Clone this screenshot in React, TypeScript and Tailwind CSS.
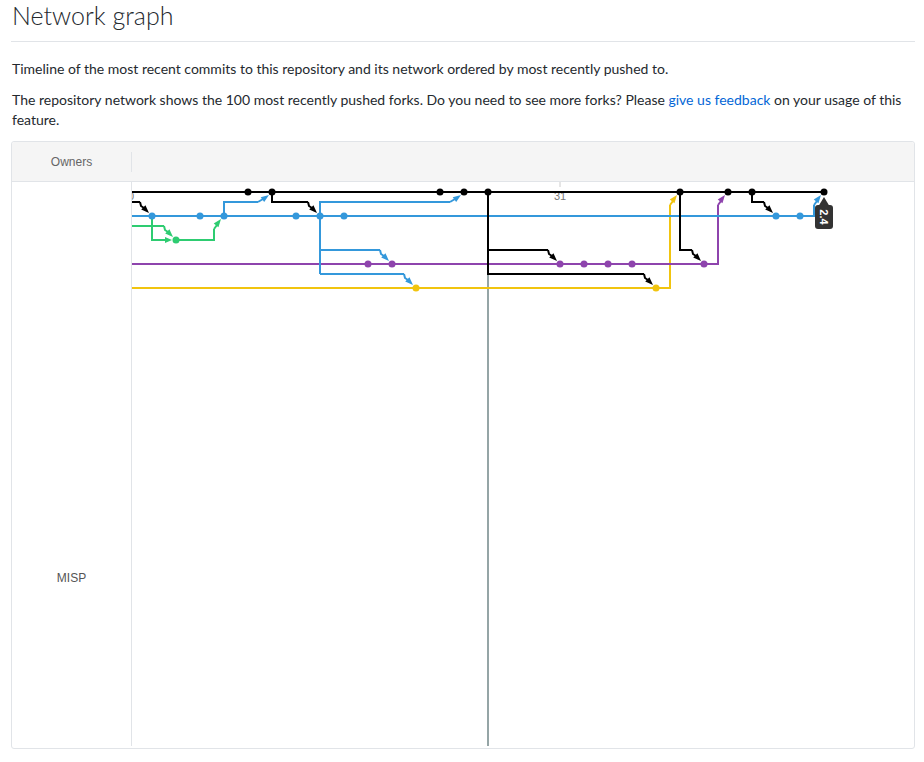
import type { ReactNode } from "react";

// Lane colours used by the network graph.
const BLACK = "#000000";
const BLUE = "#3498db";
const GREEN = "#2ecc71";
const PURPLE = "#8e44ad";
const YELLOW = "#f1c40f";
const GREY = "#95a5a6";

// Commit columns are 24px apart, rows 24px apart.
const col = (k: number) => 152 + 24 * k;
const ROW = { black: 192, blue: 216, green: 240, purple: 264, yellow: 288 };

function head(tx: number, ty: number, dx: number, dy: number, color: string, len = 8) {
  const n = Math.hypot(dx, dy);
  const ux = dx / n;
  const uy = dy / n;
  const bx = tx - ux * len;
  const by = ty - uy * len;
  const px = -uy * 3;
  const py = ux * 3;
  return (
    <polygon
      points={`${tx},${ty} ${bx + px},${by + py} ${bx - px},${by - py}`}
      fill={color}
    />
  );
}

// parent sits on a higher row: horizontal at ty-14, jog, then diagonal down into the dot
function ArrowDown({ tx, ty, color }: { tx: number; ty: number; color: string }) {
  return (
    <g>
      <path d={`M${tx - 12} ${ty - 14} L${tx - 11} ${ty - 10} L${tx - 8} ${ty - 8}`} stroke={color} strokeWidth={2} fill="none" />
      {head(tx - 3, ty - 3, 1, 1, color, 8)}
    </g>
  );
}

// parent sits on a lower row, line arrives vertically at tx-10
function ArrowUpV({ tx, ty, color }: { tx: number; ty: number; color: string }) {
  return (
    <g>
      <path d={`M${tx - 10} ${ty + 13} L${tx - 7} ${ty + 9}`} stroke={color} strokeWidth={2} fill="none" />
      {head(tx - 3, ty + 3, 7, -9, color, 8)}
    </g>
  );
}

// line arrives horizontally at ty+10
function ArrowUpH({ tx, ty, color }: { tx: number; ty: number; color: string }) {
  return (
    <g>
      <path d={`M${tx - 14} ${ty + 10} L${tx - 9} ${ty + 7}`} stroke={color} strokeWidth={2} fill="none" />
      {head(tx - 3, ty + 3, 10, -7, color, 8)}
    </g>
  );
}

function Line({ d, color }: { d: string; color: string }) {
  return <path d={d} stroke={color} strokeWidth={2} fill="none" strokeLinejoin="miter" />;
}

function Dots({ cols, y, color }: { cols: number[]; y: number; color: string }) {
  return (
    <>
      {cols.map((k) => (
        <circle key={k} cx={col(k)} cy={y} r={3.5} fill={color} />
      ))}
    </>
  );
}

function Graph(): ReactNode {
  const { black, blue, green, purple, yellow } = ROW;
  return (
    <svg width={782} height={564} viewBox="132 182 782 564" className="block shrink-0">
      {/* date labels */}
      <line x1={560} y1={182} x2={560} y2={187} stroke="#cccccc" strokeWidth={1} />
      <text x={128} y={200} fontSize={11} fill="#777" textAnchor="middle" fontFamily="'Liberation Sans', Arial, sans-serif">30</text>
      <text x={560} y={200} fontSize={11} fill="#777" textAnchor="middle" fontFamily="'Liberation Sans', Arial, sans-serif">31</text>

      {/* grey marker below the black branch */}
      <Line d={`M488 274 V746`} color={GREY} />

      {/* yellow */}
      <Line d={`M131 ${yellow} H${col(21) + 14} V${black + 13}`} color={YELLOW} />
      <ArrowUpV tx={col(22)} ty={black} color={YELLOW} />

      {/* purple */}
      <Line d={`M131 ${purple} H${col(23) + 14} V${black + 13}`} color={PURPLE} />
      <ArrowUpV tx={col(24)} ty={black} color={PURPLE} />

      {/* green */}
      <Line d={`M131 ${green - 14} H${col(1) - 12}`} color={GREEN} />
      <ArrowDown tx={col(1)} ty={green} color={GREEN} />
      <Line d={`M${col(0)} ${blue} V${green} H${col(1) - 10}`} color={GREEN} />
      {head(col(1) - 4, green, 1, 0, GREEN, 7)}
      <Line d={`M${col(1)} ${green} H${col(3) - 10} V${blue + 13}`} color={GREEN} />
      <ArrowUpV tx={col(3)} ty={blue} color={GREEN} />

      {/* blue */}
      <Line d={`M131 ${blue} H${col(27) + 14} V${black + 13}`} color={BLUE} />
      <ArrowUpV tx={col(28)} ty={black} color={BLUE} />
      <Line d={`M${col(3)} ${blue} V${black + 10} H${col(5) - 14}`} color={BLUE} />
      <ArrowUpH tx={col(5)} ty={black} color={BLUE} />
      <Line d={`M${col(7)} 274 V${black + 10} H${col(13) - 14}`} color={BLUE} />
      <ArrowUpH tx={col(13)} ty={black} color={BLUE} />
      <Line d={`M${col(7)} 250 H${col(10) - 12}`} color={BLUE} />
      <ArrowDown tx={col(10)} ty={purple} color={BLUE} />
      <Line d={`M${col(7)} 274 H${col(11) - 12}`} color={BLUE} />
      <ArrowDown tx={col(11)} ty={yellow} color={BLUE} />

      {/* black */}
      <Line d={`M131 ${black} H${col(28)}`} color={BLACK} />
      <Line d={`M131 ${blue - 14} H${col(0) - 12}`} color={BLACK} />
      <ArrowDown tx={col(0)} ty={blue} color={BLACK} />
      <Line d={`M${col(5)} ${black} V${blue - 14} H${col(7) - 12}`} color={BLACK} />
      <ArrowDown tx={col(7)} ty={blue} color={BLACK} />
      <Line d={`M${col(14)} ${black} V275`} color={BLACK} />
      <Line d={`M${col(14)} 250 H${col(17) - 12}`} color={BLACK} />
      <ArrowDown tx={col(17)} ty={purple} color={BLACK} />
      <Line d={`M${col(14)} 274 H${col(21) - 12}`} color={BLACK} />
      <ArrowDown tx={col(21)} ty={yellow} color={BLACK} />
      <Line d={`M${col(22)} ${black} V250 H${col(23) - 12}`} color={BLACK} />
      <ArrowDown tx={col(23)} ty={purple} color={BLACK} />
      <Line d={`M${col(25)} ${black} V${blue - 14} H${col(26) - 12}`} color={BLACK} />
      <ArrowDown tx={col(26)} ty={blue} color={BLACK} />

      {/* commits */}
      <Dots cols={[4, 5, 12, 13, 14, 22, 24, 25, 28]} y={black} color={BLACK} />
      <Dots cols={[0, 2, 3, 6, 7, 8, 26, 27]} y={blue} color={BLUE} />
      <Dots cols={[1]} y={green} color={GREEN} />
      <Dots cols={[9, 10, 17, 18, 19, 20, 23]} y={purple} color={PURPLE} />
      <Dots cols={[11, 21]} y={yellow} color={YELLOW} />

      {/* branch label */}
      <g>
        <polygon points={`${col(28)},197 ${col(28) - 6},207 ${col(28) + 6},207`} fill="#333333" />
        <rect x={col(28) - 9} y={205} width={18} height={24} rx={3} fill="#333333" />
        <text
          x={0}
          y={0}
          transform={`translate(${col(28) - 4} 217) rotate(90)`}
          fontSize={11}
          fontWeight={700}
          fill="#ffffff"
          textAnchor="middle"
          fontFamily="'Liberation Sans', Arial, sans-serif"
        >
          2.4
        </text>
      </g>
    </svg>
  );
}

export default function App() {
  return (
    <div className="min-h-[762px] w-[924px] bg-white pl-[11px] font-['Lato',sans-serif] text-[#24292e]">
      <div className="w-[904px]">
        <h2 className="h-[42px] border-b border-[#e1e4e8] pl-px text-[25px] leading-[30px] font-light">
          Network graph
        </h2>
        <p className="mt-[17px] pl-px text-[14px] leading-[20px]">
          Timeline of the most recent commits to this repository and its network ordered by most recently pushed to.
        </p>
        <p className="mt-[11px] pl-px text-[14px] leading-[20px]">
          The repository network shows the 100 most recently pushed forks. Do you need to see more forks? Please{" "}
          <a href="#" className="text-[#0366d6]">
            give us feedback
          </a>{" "}
          on your usage of this feature.
        </p>

        <div className="mt-[11px] rounded-[3px] border border-[#e1e4e8] font-['Liberation_Sans',Arial,sans-serif]">
          <div className="flex h-[40px] items-center rounded-t-[3px] border-b border-[#e1e4e8] bg-[#f5f5f5]">
            <div className="w-[119px] text-center text-[12px] text-[#666]">Owners</div>
            <div className="h-[20px] w-px bg-[#e1e4e8]" />
          </div>
          <div className="flex pb-[2px]">
            <div className="h-[564px] w-[120px] shrink-0 border-r border-[#e1e4e8] pt-[387px] text-center text-[12px] text-[#555]">
              MISP
            </div>
            <Graph />
          </div>
        </div>
      </div>
    </div>
  );
}
